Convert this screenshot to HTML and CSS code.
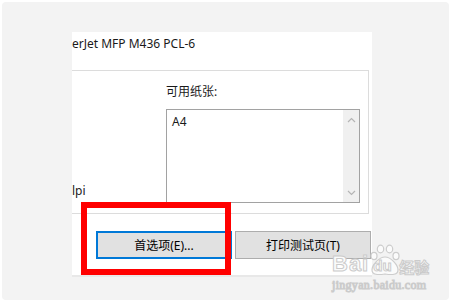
FILE: index.html
```html
<!DOCTYPE html>
<html>
<head>
<meta charset="utf-8">
<link rel="stylesheet" href="styles.css">
</head>
<body>
<div class="frame">
  <div class="dialog">
    <div class="title">erJet MFP M436 PCL-6</div>
    <div class="group">
      <div class="left-col"><span class="lpi">lpi</span></div>
      <div class="right-col">
        <div class="label">可用纸张:</div>
        <div class="listbox">
          <div class="items"><div class="item">A4</div></div>
          <div class="scroll">
            <svg class="chev" width="9" height="6" viewBox="0 0 9 6"><path d="M1 5 L4.5 1.5 L8 5" fill="none" stroke="#b5b5b5" stroke-width="1.2"/></svg>
            <svg class="chev" width="9" height="6" viewBox="0 0 9 6"><path d="M1 1 L4.5 4.5 L8 1" fill="none" stroke="#b5b5b5" stroke-width="1.2"/></svg>
          </div>
        </div>
      </div>
    </div>
    <div class="buttons">
      <div class="btn btn-default">首选项(E)...</div>
      <div class="btn">打印测试页(T)</div>
    </div>
  </div>
  <div class="dialog-shadow"></div>
  <div class="redbox"></div>
  <div class="watermark">
    <div class="wm-row">
      <span class="wm-bai">Bai</span>
      <span class="wm-paw">
        <svg width="34" height="32" viewBox="0 0 34 32">
          <g fill="#fbfbfb" stroke="#cdcdcd" stroke-width="1.2">
            <ellipse cx="6" cy="12" rx="3" ry="3.6"/>
            <ellipse cx="12.5" cy="5" rx="3.2" ry="3.8"/>
            <ellipse cx="21.5" cy="5" rx="3.2" ry="3.8"/>
            <ellipse cx="28" cy="12" rx="3" ry="3.6"/>
            <path d="M17 13 C11 13 4 21 4 26 C4 31 10 31 17 30 C24 31 30 31 30 26 C30 21 23 13 17 13 Z"/>
          </g>
        </svg>
        <span class="wm-du">du</span>
      </span>
      <span class="wm-jy">经验</span>
    </div>
    <div class="wm-url">jingyan.baidu.com</div>
  </div>
</div>
</body>
</html>
```
FILE: styles.css
```css
html, body {
  margin: 0;
  padding: 0;
  background: #ffffff;
}
body {
  width: 450px;
  height: 300px;
  overflow: hidden;
  font-family: "Noto Sans", "Noto Sans CJK SC", sans-serif;
  font-size: 12px;
  color: #1a1a1a;
}
.frame {
  position: relative;
  margin: 2px 0 0 2px;
  width: 447px;
  height: 298px;
  background: #f3f3f3;
  border-radius: 4px;
  padding: 30px 0 0 70px;
  box-sizing: border-box;
}
.dialog {
  width: 300px;
  height: 243px;
  background: #ffffff;
  display: flex;
  flex-direction: column;
}
.dialog-shadow {
  width: 300px;
  height: 2px;
  background: #e8e8e8;
}
.title {
  height: 38px;
  box-sizing: border-box;
  padding-top: 4px;
  line-height: 16px;
  white-space: nowrap;
}
.group {
  height: 144px;
  box-sizing: border-box;
  margin-right: 3px;
  border-top: 1px solid #dcdcdc;
  border-right: 1px solid #dcdcdc;
  border-bottom: 1px solid #dcdcdc;
  display: flex;
}
.left-col {
  width: 94px;
  display: flex;
  flex-direction: column;
  justify-content: flex-end;
  padding-bottom: 14px;
  line-height: 16px;
}
.lpi {
  color: #222;
}
.right-col {
  padding-top: 13px;
  display: flex;
  flex-direction: column;
}
.label {
  line-height: 16px;
  height: 16px;
  margin-bottom: 9px;
}
.listbox {
  width: 194px;
  height: 94px;
  box-sizing: border-box;
  border: 1px solid #a2a2a2;
  display: flex;
}
.items {
  flex: 1;
  padding: 4px 5px;
}
.item {
  line-height: 16px;
}
.scroll {
  width: 16px;
  background: #f0f0f0;
  display: flex;
  flex-direction: column;
  justify-content: space-between;
  align-items: center;
  padding: 7px 0 6px;
}
.chev {
  display: block;
}
.buttons {
  display: flex;
  gap: 3px;
  margin-top: 17px;
  padding-left: 24px;
}
.btn {
  width: 136px;
  height: 28px;
  box-sizing: border-box;
  background: #e1e1e1;
  border: 1px solid #adadad;
  display: flex;
  align-items: center;
  justify-content: center;
  color: #000;
  flex-shrink: 0;
}
.btn-default {
  border: 2px solid #0078d7;
}
.redbox {
  position: absolute;
  left: 79px;
  top: 200px;
  width: 150px;
  height: 73px;
  box-sizing: border-box;
  border: 6px solid #ff0000;
}
.watermark {
  position: absolute;
  left: 330px;
  top: 242px;
  color: #fbfbfb;
  -webkit-text-stroke: 1px #cbcbcb;
}
.wm-row {
  display: flex;
  align-items: flex-end;
  height: 32px;
}
.wm-bai {
  font-family: "Liberation Sans", sans-serif;
  font-weight: bold;
  font-size: 22px;
  line-height: 22px;
  letter-spacing: 1px;
  margin-bottom: 1px;
}
.wm-paw {
  position: relative;
  width: 34px;
  height: 32px;
  margin-left: -1px;
}
.wm-paw svg {
  display: block;
}
.wm-du {
  position: absolute;
  left: 5px;
  top: 14px;
  font-family: "Liberation Sans", sans-serif;
  font-weight: bold;
  font-size: 15px;
  line-height: 16px;
  color: #fbfbfb;
}
.wm-jy {
  font-family: "Noto Sans CJK SC", sans-serif;
  font-weight: bold;
  font-size: 15px;
  line-height: 16px;
  margin-left: -3px;
  margin-bottom: 1px;
}
.wm-url {
  font-family: "Liberation Serif", serif;
  font-size: 12px;
  line-height: 12px;
  margin-top: 3px;
  letter-spacing: 0.3px;
}
```
